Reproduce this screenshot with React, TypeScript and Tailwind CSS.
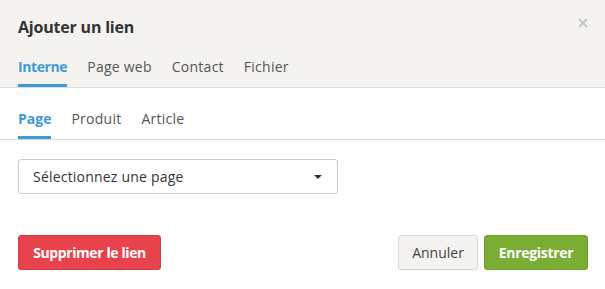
import React from "react";

const tabs = ["Interne", "Page web", "Contact", "Fichier"];
const subTabs = ["Page", "Produit", "Article"];

const idleTab =
  "pb-[5px] border-b-[3px] border-transparent text-[#555] leading-[25px] tracking-[0.25px]";

export default function App() {
  return (
    <div className="w-[605px] h-[289px] bg-white text-[#333] font-['Open_Sans',sans-serif] overflow-hidden">
      {/* Header */}
      <div className="bg-[#f4f3ef] border-b border-[#dcdcdc] px-[18px]">
        <div className="flex items-start justify-between pt-[16px] h-[54px]">
          <h2 className="text-[16px] font-bold leading-[22px] text-[#333] tracking-[-0.2px]">Ajouter un lien</h2>
          <svg width="10" height="10" viewBox="0 0 10 10" className="mt-[2px] mr-[-1px]">
            <path d="M1 1l8 8M9 1l-8 8" stroke="#c6c6c6" strokeWidth="2" />
          </svg>
        </div>
        <div className="flex gap-[20px] text-[14px]">
          {tabs.map((t, i) => (
            <div
              key={t}
              className={
                i === 0
                  ? "pb-[5px] border-b-[3px] border-[#3d9ad6] font-bold text-[#3d9ad6] leading-[25px] tracking-[-0.4px]"
                  : idleTab
              }
            >
              {t}
            </div>
          ))}
        </div>
      </div>

      {/* Sub tabs */}
      <div className="flex gap-[20px] px-[18px] pt-[18px] border-b border-[#dcdcdc] text-[14px]">
        {subTabs.map((t, i) => (
          <div
            key={t}
            className={
              i === 0
                ? "pb-[5px] border-b-[3px] border-[#3d9ad6] font-bold text-[#3d9ad6] leading-[25px]"
                : idleTab
            }
          >
            {t}
          </div>
        ))}
      </div>

      {/* Select */}
      <div className="px-[18px] pt-[19px]">
        <div className="w-[320px] h-[35px] border border-[#ccc] rounded-[3px] flex items-center justify-between pl-[14px] pr-[15px] text-[14px] text-[#333] tracking-[0.2px]">
          <span>Sélectionnez une page</span>
          <svg width="8" height="4" viewBox="0 0 8 4">
            <path d="M0 0h8L4 4z" fill="#333" />
          </svg>
        </div>
      </div>

      {/* Footer */}
      <div className="flex items-center justify-between px-[18px] pt-[41px]">
        <button className="h-[35px] w-[143px] rounded-[3px] bg-[#e8434d] border border-[#d93c46] text-white font-bold text-[14px] tracking-[-0.4px]">
          Supprimer le lien
        </button>
        <div className="flex gap-[6px] mr-[-1px]">
          <button className="h-[35px] w-[80px] rounded-[3px] bg-[#f4f3ef] border border-[#d8d8d8] text-[#444] text-[14px]">
            Annuler
          </button>
          <button className="h-[35px] w-[104px] rounded-[3px] bg-[#7aad34] border border-[#6fa02e] text-white font-bold text-[14px] tracking-[-0.3px]">
            Enregistrer
          </button>
        </div>
      </div>
    </div>
  );
}
